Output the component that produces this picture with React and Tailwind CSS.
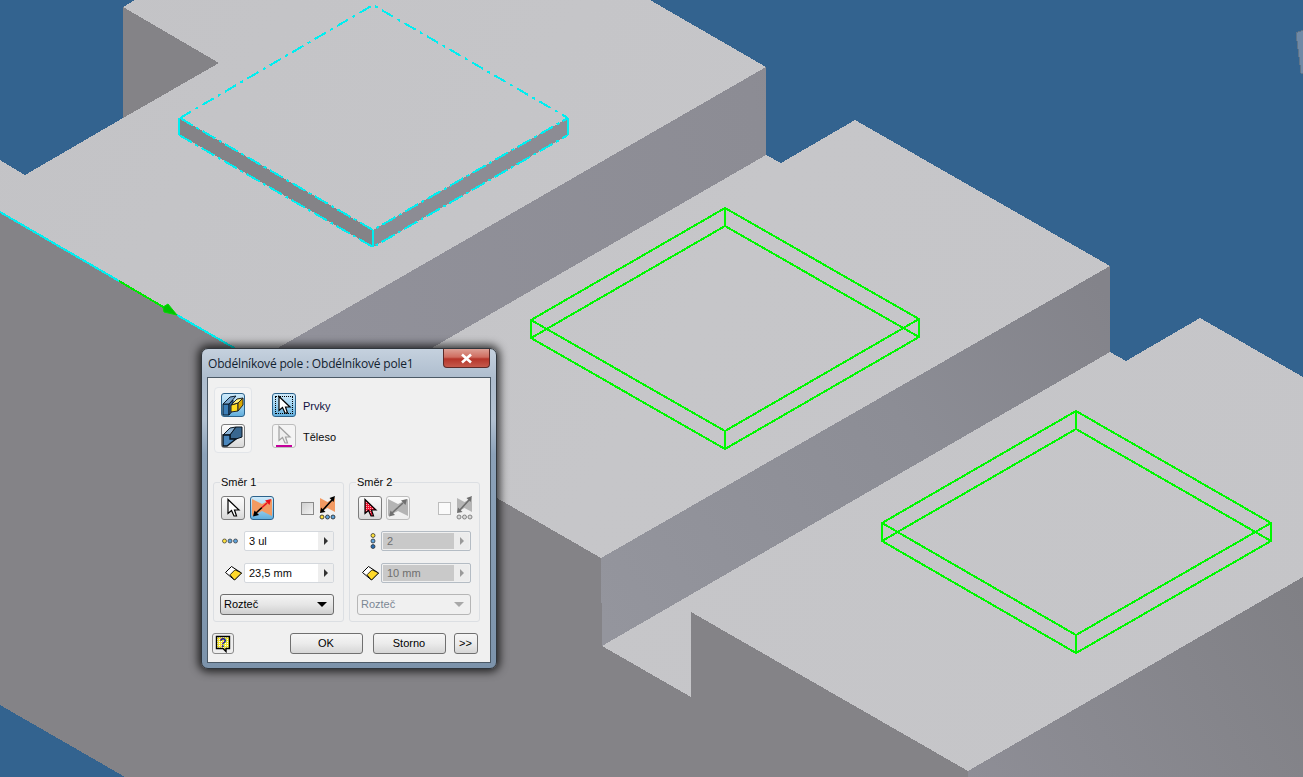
import React from "react";

const LEFT = "#848387";

function Wire({ x, y1, r, l, b, d = 18 }) {
  const t = `${x},${y1} ${r[0]},${r[1]} ${x},${b} ${l[0]},${l[1]}`;
  const t2 = `${x},${y1 + d} ${r[0]},${r[1] + d} ${x},${b + d} ${l[0]},${l[1] + d}`;
  return (
    <g fill="none" stroke="#00f800" strokeWidth="2">
      <polygon points={t} />
      <polygon points={t2} />
      <line x1={x} y1={y1} x2={x} y2={y1 + d} />
      <line x1={x} y1={b} x2={x} y2={b + d} />
      <line x1={r[0]} y1={r[1]} x2={r[0]} y2={r[1] + d} />
      <line x1={l[0]} y1={l[1]} x2={l[0]} y2={l[1] + d} />
    </g>
  );
}

function Scene() {
  return (
    <svg className="absolute inset-0 block" width="1303" height="777" viewBox="0 0 1303 777" shapeRendering="crispEdges">
      <defs>
        <linearGradient id="rf1" gradientUnits="userSpaceOnUse" x1="330" y1="400" x2="1110" y2="200">
          <stop offset="0" stopColor="#91919a" />
          <stop offset="0.6" stopColor="#8c8c94" />
          <stop offset="1" stopColor="#85858b" />
        </linearGradient>
        <linearGradient id="rf2" gradientUnits="userSpaceOnUse" x1="601" y1="620" x2="1110" y2="300">
          <stop offset="0" stopColor="#94959d" />
          <stop offset="0.6" stopColor="#8c8d95" />
          <stop offset="1" stopColor="#83838a" />
        </linearGradient>
        <linearGradient id="rf3" gradientUnits="userSpaceOnUse" x1="968" y1="777" x2="1303" y2="590">
          <stop offset="0" stopColor="#8e8e96" />
          <stop offset="1" stopColor="#808085" />
        </linearGradient>
        <linearGradient id="top" gradientUnits="userSpaceOnUse" x1="0" y1="0" x2="1303" y2="777">
          <stop offset="0" stopColor="#c3c3c6" />
          <stop offset="0.5" stopColor="#c6c6c9" />
          <stop offset="1" stopColor="#c5c5c8" />
        </linearGradient>
      </defs>
      <rect width="1303" height="777" fill="#33638f" />
      {/* far left wall */}
      <polygon points="123,7 219,63 123,118" fill={LEFT} />
      {/* right walls */}
      <polygon points="766,67 766,155 333,405 257,360" fill="url(#rf1)" />
      <polygon points="1110,266 1110,352 602,646 601,558" fill="url(#rf2)" />
      <polygon points="968,771 1303,577 1303,777 968,777" fill="url(#rf3)" />
      {/* top faces */}
      <polygon points="0,160 25,175 123,118 219,63 123,7 135,0 650,0 766,67 257,360 0,212" fill="url(#top)" />
      <polygon points="766,155 781,163 855,120 1110,266 601,558 333,405" fill="url(#top)" />
      <polygon points="1110,352 1126,361 1200,318 1303,377 1303,577 968,771 691,612 691,697 602,646" fill="url(#top)" />
      {/* big left wall */}
      <polygon points="0,212 601,558 602,646 691,697 691,612 968,771 968,777 125,777 0,705" fill={LEFT} />
      {/* view cube sliver */}
      <polygon points="1296,33 1303,30 1303,74 1301,73" fill="#6f89a6" stroke="#5f7488" strokeWidth="1" />
      {/* feature 1 */}
      <polygon points="180,118 373,230 373,247 180,135" fill={LEFT} />
      <polygon points="568,118 373,230 373,247 568,135" fill="#8c8c94" />
      <polygon points="373,5 568,118 373,230 180,118" fill="url(#top)" />
      <g fill="none" stroke="#00eef0" strokeWidth="2">
        <polyline points="180,118 373,5 568,118" strokeDasharray="13 5 3 5" />
        <polyline points="180,118 373,230 568,118" strokeDasharray="15 4 3 4" />
        <polyline points="179,135 373,247 568,135" strokeDasharray="15 4 3 4" />
        <line x1="179" y1="118" x2="179" y2="135" />
        <line x1="568" y1="118" x2="568" y2="135" />
        <line x1="373" y1="230" x2="373" y2="247" />
        <line x1="0" y1="212" x2="119" y2="281" />
        <line x1="177" y1="315" x2="236" y2="349" />
      </g>
      {/* direction arrow */}
      <line x1="119" y1="281" x2="165" y2="308" stroke="#00e800" strokeWidth="2" />
      <polygon points="163,307 168,304 177,315 164,312" fill="#00c400" stroke="#00dc00" strokeWidth="1" shapeRendering="auto" />
      <Wire x={725} y1={208} r={[919, 319]} l={[531, 320]} b={431} />
      <Wire x={1076} y1={411} r={[1271, 523]} l={[882, 523]} b={635} />
    </svg>
  );
}

const BTN = "w-[24px] h-[24px] shrink-0 rounded-[3px] border border-[#7d7d7d] bg-[linear-gradient(#fbfbfb,#eeeeee_50%,#d8d8d8)] flex items-center justify-center";
const BTN_ON = "w-[24px] h-[24px] shrink-0 rounded-[3px] border border-[#2c628b] bg-[linear-gradient(#cfeafa,#9fd3f2_50%,#62aedc)] flex items-center justify-center";
const BTN_OFF = "w-[24px] h-[24px] shrink-0 rounded-[3px] border border-[#bdbdbd] bg-[linear-gradient(#fafafa,#eeeeee)] flex items-center justify-center";

function Cursor({ fill = "#fff", stroke = "#000", id }) {
  return (
    <svg width="16" height="20" viewBox="0 0 16 20" shapeRendering="crispEdges">
      {id && (
        <defs>
          <pattern id={id} width="2" height="2" patternUnits="userSpaceOnUse">
            <rect width="2" height="2" fill="#f01030" />
            <rect width="1" height="1" fill="#ffb0b0" />
          </pattern>
        </defs>
      )}
      <path d="M3 1.5V15.5L6.5 12.5L9 18H11.5L9.5 12H14Z" fill={id ? `url(#${id})` : fill} stroke={stroke} strokeWidth="1.2" shapeRendering="auto" />
    </svg>
  );
}

function PatternIcon() {
  return (
    <svg width="22" height="22" viewBox="0 0 22 22">
      <polygon points="1,10 7,10 7,21 1,21" fill="#3d7fb8" stroke="#0b1c2c" />
      <polygon points="1,10 8,3 14,2 7,10" fill="#7fa9cf" stroke="#0b1c2c" />
      <polygon points="7,10 11,6 11,16 7,21" fill="#2c5f8f" stroke="#0b1c2c" />
      <polygon points="9,11 16,9 16,17 9,18" fill="#ffdd22" stroke="#222" />
      <polygon points="9,11 15,5 21,4 16,9" fill="#fff07a" stroke="#222" />
      <polygon points="16,9 21,4 21,11 16,17" fill="#d9a800" stroke="#222" />
    </svg>
  );
}

function SolidIcon() {
  return (
    <svg width="22" height="22" viewBox="0 0 22 22">
      <polygon points="1,10 8,3 14,2 8,10" fill="#8fb4d6" stroke="#08131d" />
      <polygon points="8,10 14,2 20,2 20,12 14,14 8,14" fill="#39678f" stroke="#08131d" />
      <polygon points="1,10 8,10 8,14 14,14 5,21 1,21" fill="#4a86bc" stroke="#08131d" strokeWidth="1.4" />
    </svg>
  );
}

function Bowtie({ w = 22, h = 20, fill = "#f39a62", a = "#000", b = "#e8101c" }) {
  return (
    <svg width={w} height={h} viewBox="0 0 22 20">
      <polygon points="1,1 11,6 21,1 21,18 11,13 1,18" fill={fill} />
      <line x1="5" y1="15" x2="11" y2="9.5" stroke={a} strokeWidth="1.6" />
      <polygon points="2,18.5 3.5,12.5 8,17" fill={a} />
      <line x1="11" y1="9.5" x2="16" y2="5" stroke={b} strokeWidth="1.6" />
      <polygon points="20,1 14,2.5 18.5,7" fill={b} />
    </svg>
  );
}

function BowtieDots({ off }) {
  const f = off ? "#b6b6b6" : "#f39a62";
  const a = off ? "#6e6e6e" : "#000";
  const s = off ? "#6e6e6e" : "#222";
  return (
    <svg width="17" height="24" viewBox="0 0 17 24" className="shrink-0">
      <polygon points="1,2 8.5,6 16,2 16,16 8.5,12 1,16" fill={f} />
      <line x1="3" y1="15" x2="13" y2="4" stroke={a} strokeWidth="1.6" />
      <polygon points="16,0 10.5,2 14.5,6" fill={a} />
      <polygon points="1,17 2,11.5 6.5,16" fill={a} />
      <circle cx="3" cy="21" r="2" fill={off ? "#d8d8d8" : "#ffe23c"} stroke={s} strokeWidth="0.8" />
      <circle cx="8.5" cy="21" r="2" fill={off ? "#d8d8d8" : "#5ea3dc"} stroke={s} strokeWidth="0.8" />
      <circle cx="14" cy="21" r="2" fill={off ? "#d8d8d8" : "#5ea3dc"} stroke={s} strokeWidth="0.8" />
    </svg>
  );
}

function DotsH() {
  return (
    <svg width="16" height="6" viewBox="0 0 16 6" className="shrink-0">
      <circle cx="2.5" cy="3" r="2" fill="#ffe23c" stroke="#333" strokeWidth="0.7" />
      <circle cx="8" cy="3" r="2" fill="#5ea3dc" stroke="#333" strokeWidth="0.7" />
      <circle cx="13.5" cy="3" r="2" fill="#5ea3dc" stroke="#333" strokeWidth="0.7" />
    </svg>
  );
}

function DotsV() {
  return (
    <svg width="6" height="16" viewBox="0 0 6 16" className="shrink-0">
      <circle cx="3" cy="2.5" r="2" fill="#ffe23c" stroke="#222" strokeWidth="0.7" />
      <circle cx="3" cy="8" r="2" fill="#5ea3dc" stroke="#222" strokeWidth="0.7" />
      <circle cx="3" cy="13.5" r="2" fill="#2a6cb0" stroke="#222" strokeWidth="0.7" />
    </svg>
  );
}

function Spacing() {
  return (
    <svg width="17" height="16" viewBox="0 0 17 16" className="shrink-0">
      <polygon points="0.5,7.5 6.5,1.5 16.5,8 9.5,15" fill="#fff" stroke="#000" />
      <polygon points="5,9.8 10,4.8 16.5,8 9.5,15" fill="#ffd92a" stroke="#000" strokeWidth="0.8" />
    </svg>
  );
}

function Help() {
  return (
    <svg width="16" height="18" viewBox="0 0 16 18">
      <defs>
        <pattern id="hp" width="2" height="2" patternUnits="userSpaceOnUse">
          <rect width="2" height="2" fill="#f4e62a" />
          <rect width="1" height="1" fill="#ffffff" />
        </pattern>
      </defs>
      <path d="M1.5 1.5H14.5V13.5H11V16.5L8 13.5H1.5Z" fill="url(#hp)" stroke="#000" strokeWidth="1.4" />
      <text x="8" y="12" textAnchor="middle" fontSize="12" fontWeight="700" fontFamily="'Liberation Sans',sans-serif" fill="#1a1a8c">?</text>
    </svg>
  );
}

function Field({ value, off }) {
  return (
    <div className={off
      ? "w-[90px] h-[20px] shrink-0 border border-[#b4bcc4] rounded-[2px] bg-[#f0f0f0] p-px flex"
      : "w-[90px] h-[20px] shrink-0 border border-[#d4d8dd] rounded-[2px] bg-white flex"}>
      <div className={off
        ? "flex-1 bg-[#c9c9c9] text-[#6f6f6f] pl-[4px] leading-[16px]"
        : "flex-1 text-[#0a0a0a] pl-[4px] leading-[18px]"}>{value}</div>
      <div className={off
        ? "w-[15px] flex items-center justify-center bg-[#ececec]"
        : "w-[15px] flex items-center justify-center bg-[#eeeeee]"}>
        <div className={off
          ? "w-0 h-0 border-y-[4px] border-y-transparent border-l-[4px] border-l-[#9a9a9a]"
          : "w-0 h-0 border-y-[4px] border-y-transparent border-l-[4px] border-l-[#333]"} />
      </div>
    </div>
  );
}

function Pick({ off, value }) {
  return (
    <div className={off
      ? "w-[114px] h-[21px] border border-[#b6b6b6] rounded-[3px] bg-[#f0f0f0] flex items-center justify-between pl-[3px] pr-[6px] text-[#7b8794]"
      : "w-[114px] h-[21px] border border-[#6d6d6d] rounded-[3px] bg-[linear-gradient(#f4f4f4,#e6e6e6_50%,#cfcfcf)] flex items-center justify-between pl-[3px] pr-[6px] text-black"}>
      <span>{value}</span>
      <div className={off
        ? "w-0 h-0 border-x-[5px] border-x-transparent border-t-[5px] border-t-[#a8a8a8]"
        : "w-0 h-0 border-x-[5px] border-x-transparent border-t-[5px] border-t-black"} />
    </div>
  );
}

function Push({ w, children }) {
  return (
    <div className={`${w} h-[21px] shrink-0 rounded-[3px] border border-[#707070] bg-[linear-gradient(#f6f6f6,#ebebeb_50%,#d6d6d6)] flex items-center justify-center text-black pr-px`}>
      {children}
    </div>
  );
}

function Dialog() {
  return (
    <div className="absolute left-[201px] top-[348px] w-[296px] h-[321px] rounded-[7px] border border-[#30363c] flex flex-col px-[5px] pb-[5px] shadow-[0_0_9px_3px_rgba(0,0,0,0.72)] bg-[linear-gradient(#c5d1de,#aebdce_9%,#b3c2d2_22%,#8ca2b9_33%,#7c93ab_100%)] text-[11px] text-[#0a0a0a] font-['Liberation_Sans',sans-serif]">
      <div className="h-[28px] shrink-0 flex items-start justify-between">
        <span className="mt-[7px] ml-px text-[12px] leading-[16px] text-[#12222f] font-['Open_Sans',sans-serif] tracking-[-0.18px]">Obdélníkové pole : Obdélníkové pole1</span>
        <div className="mr-px w-[47px] h-[19px] rounded-b-[4px] border border-t-0 border-[#5c2a28] bg-[linear-gradient(#dda095,#cf6d60_45%,#b5352a_55%,#c55a4c)] flex items-center justify-center">
          <svg width="13" height="11" viewBox="0 0 13 11">
            <path d="M2 1.5L11 9.5M11 1.5L2 9.5" stroke="#fff" strokeWidth="2.6" />
          </svg>
        </div>
      </div>
      <div className="flex-1 border border-[#4b5966] bg-[#f0f0f0] flex flex-col">
        <div className="flex mt-[9px] ml-[6px]">
          <div className="w-[38px] h-[66px] rounded-[4px] border border-[#e2e5e9] bg-[#f4f4f4] flex flex-col items-center justify-center gap-[7px]">
            <div className={BTN_ON}><PatternIcon /></div>
            <div className={BTN}><SolidIcon /></div>
          </div>
          <div className="ml-[20px] mt-[6px] flex flex-col gap-[7px]">
            <div className="flex items-center gap-[7px]">
              <div className={`${BTN_ON} relative`}>
                <div className="absolute inset-[2px] border border-dotted border-black" />
                <Cursor />
              </div>
              <span className="pt-[2px] text-[#101040]">Prvky</span>
            </div>
            <div className="flex items-center gap-[7px]">
              <div className="w-[24px] h-[24px] rounded-[3px] border border-[#bdbdbd] bg-[#f4f4f4] flex flex-col items-center">
                <Cursor fill="#eeeeee" stroke="#a0a0a0" />
                <div className="w-[16px] h-[2px] bg-[#c4009a]" />
              </div>
              <span className="pt-[2px]">Těleso</span>
            </div>
          </div>
        </div>

        <div className="flex ml-[5px] mt-[22px] gap-[5px]">
          <fieldset className="w-[131px] h-[147px] border border-[#dcdfe3] rounded-[3px] min-w-0">
            <legend className="ml-[6px] px-[1px] leading-[15px]">Směr 1</legend>
            <div className="flex items-center pl-[7px] mt-[6px]">
              <div className={BTN}><Cursor /></div>
              <div className={`${BTN_ON} ml-[5px]`}><Bowtie /></div>
              <div className="ml-[27px] w-[13px] h-[13px] border border-[#8a8a8a] bg-[linear-gradient(135deg,#d0d0d0,#f2f2f2)] shrink-0" />
              <div className="ml-[5px]"><BowtieDots /></div>
            </div>
            <div className="flex items-center mt-[11px] pl-[8px]">
              <DotsH />
              <div className="ml-[6px]"><Field value="3 ul" /></div>
            </div>
            <div className="flex items-center mt-[12px] pl-[11px]">
              <Spacing />
              <div className="ml-[2px]"><Field value="23,5 mm" /></div>
            </div>
            <div className="ml-[6px] mt-[11px]"><Pick value="Rozteč" /></div>
          </fieldset>

          <fieldset className="w-[131px] h-[147px] border border-[#dcdfe3] rounded-[3px] min-w-0">
            <legend className="ml-[6px] px-[1px] leading-[15px]">Směr 2</legend>
            <div className="flex items-center pl-[8px] mt-[6px]">
              <div className={BTN}><Cursor id="redc" /></div>
              <div className={`${BTN_OFF} ml-[4px]`}><Bowtie fill="#b4b4b4" a="#707070" b="#707070" /></div>
              <div className="ml-[28px] w-[13px] h-[13px] border border-[#bdbdbd] bg-[#fafafa] shrink-0" />
              <div className="ml-[5px]"><BowtieDots off /></div>
            </div>
            <div className="flex items-center mt-[11px] pl-[20px]">
              <DotsV />
              <div className="ml-[5px]"><Field value="2" off /></div>
            </div>
            <div className="flex items-center mt-[12px] pl-[12px]">
              <Spacing />
              <div className="ml-[2px]"><Field value="10 mm" off /></div>
            </div>
            <div className="ml-[7px] mt-[11px]"><Pick value="Rozteč" off /></div>
          </fieldset>
        </div>

        <div className="flex items-center ml-[4px] mt-[11px]">
          <div className="w-[22px] h-[21px] rounded-[3px] border border-[#8a8a8a] bg-[#eeeeee] flex items-center justify-center"><Help /></div>
          <div className="ml-[56px]"><Push w="w-[73px]">OK</Push></div>
          <div className="ml-[10px]"><Push w="w-[73px]">Storno</Push></div>
          <div className="ml-[8px]"><Push w="w-[24px]">&gt;&gt;</Push></div>
        </div>
      </div>
    </div>
  );
}

export default function App() {
  return (
    <div className="relative w-[1303px] h-[777px] overflow-hidden bg-[#33638f]">
      <Scene />
      <Dialog />
    </div>
  );
}
